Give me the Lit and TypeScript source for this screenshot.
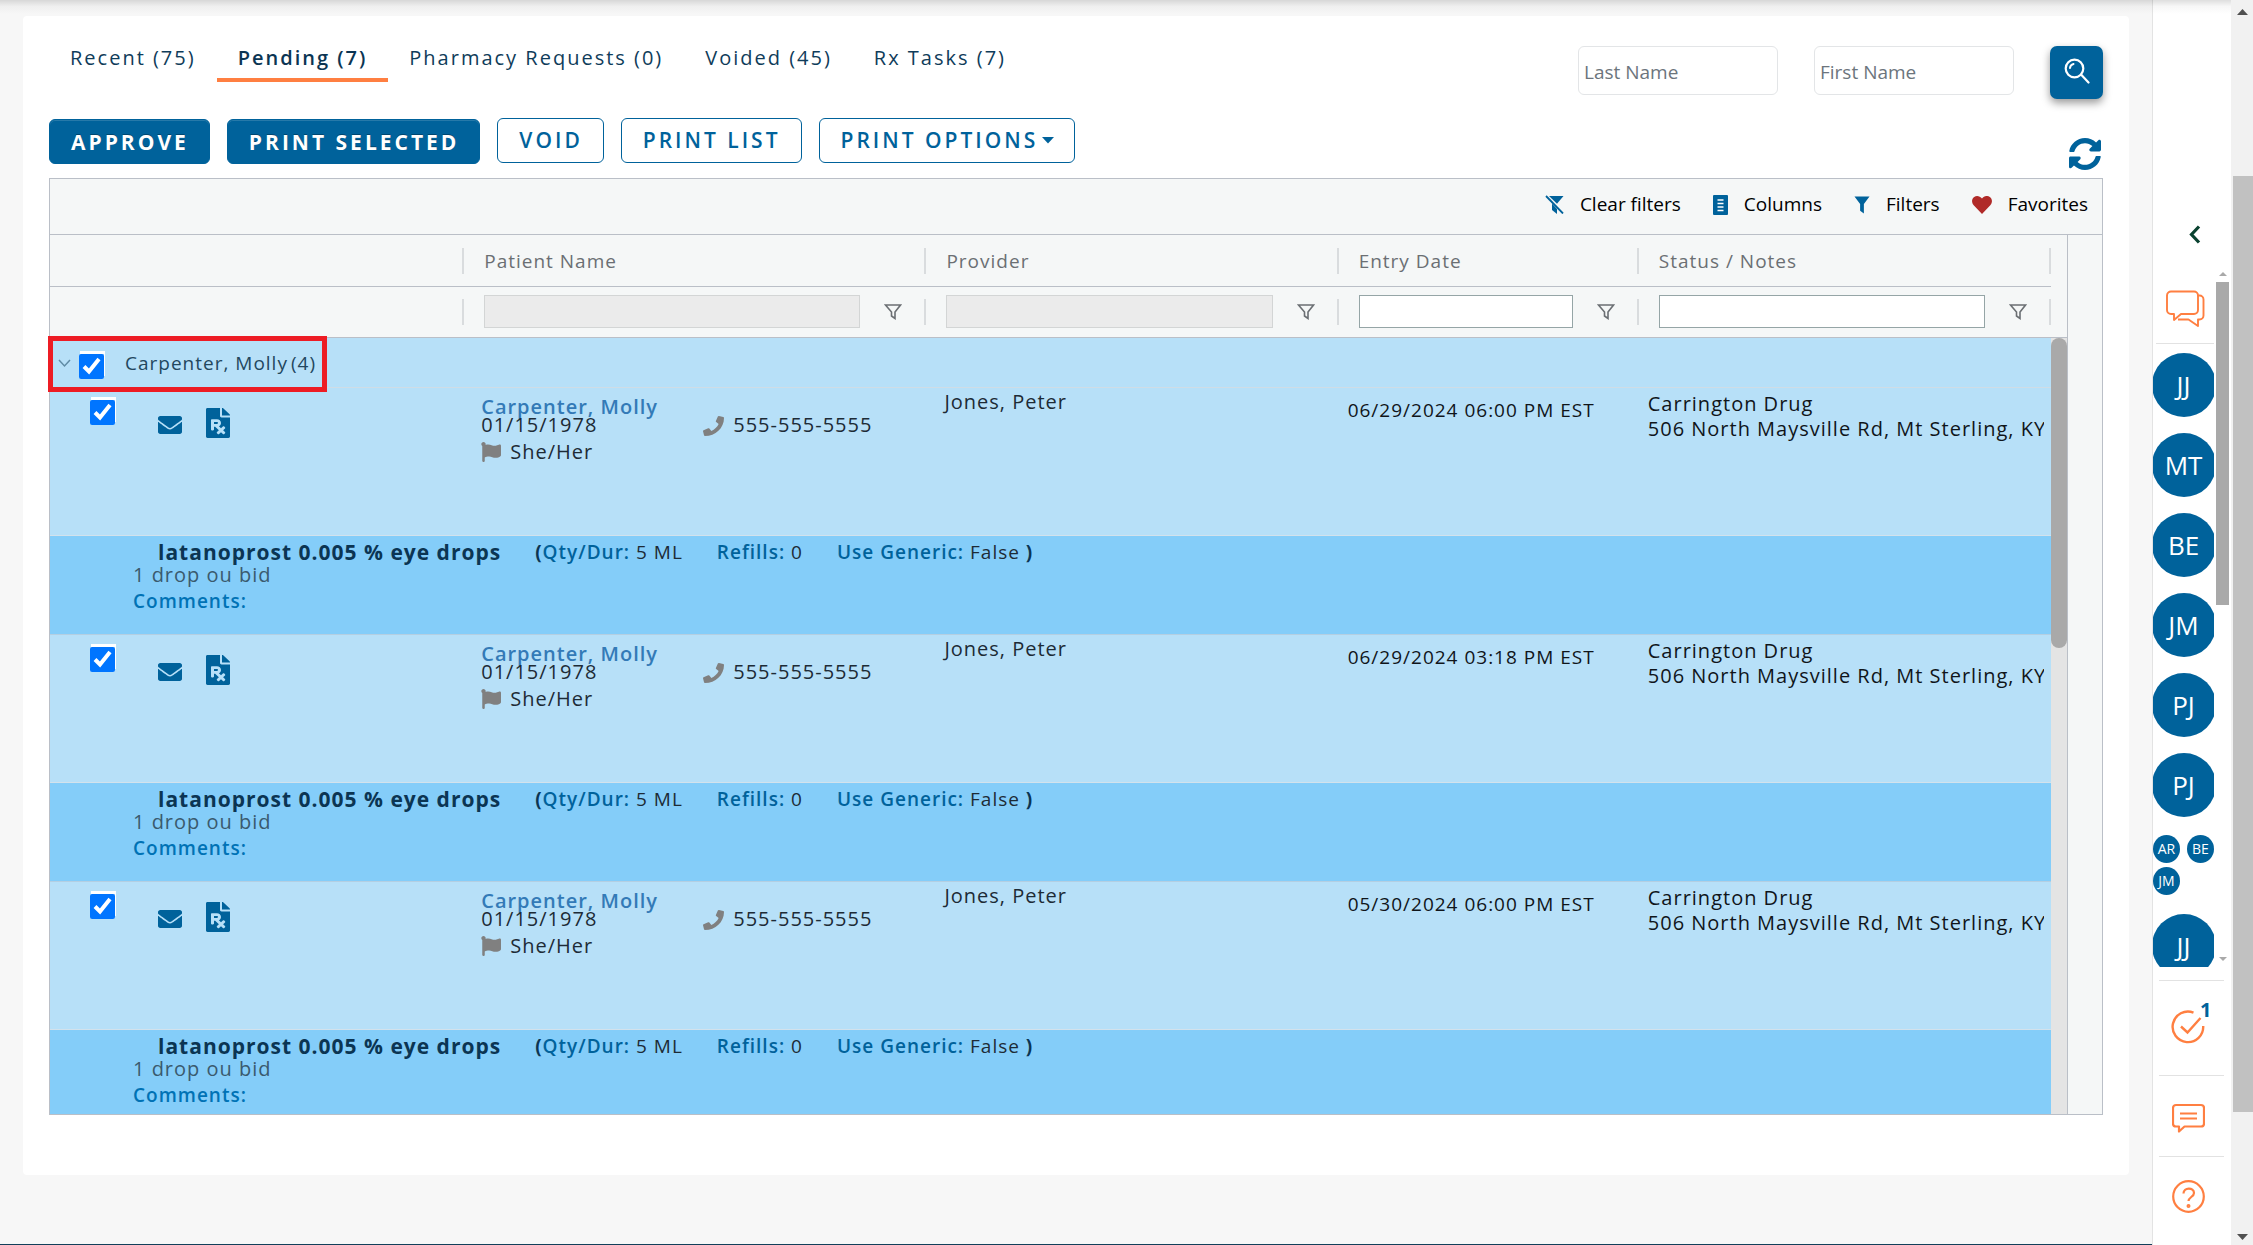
import { LitElement, html, svg, css } from "lit";
import { customElement } from "lit/decorators.js";

type Rx = { time: string };

const rows: Rx[] = [
  { time: "06/29/2024 06:00 PM EST" },
  { time: "06/29/2024 03:18 PM EST" },
  { time: "05/30/2024 06:00 PM EST" },
];

const shapes = {
  envelope: svg`<path d="M502.3 190.8c3.9-3.1 9.7-.2 9.7 4.7V400c0 26.5-21.5 48-48 48H48c-26.5 0-48-21.5-48-48V195.6c0-5 5.7-7.8 9.7-4.7 22.4 17.4 52.1 39.5 154.1 113.6 21.1 15.4 56.7 47.8 92.2 47.6 35.7.3 72-32.8 92.3-47.6 102-74.1 131.6-96.3 154-113.7zM256 320c23.2.4 56.6-29.2 73.4-41.4 132.7-96.3 142.8-104.7 173.4-128.7 5.8-4.5 9.2-11.5 9.2-18.9v-19c0-26.5-21.5-48-48-48H48c-26.5 0-48 21.5-48 48v19c0 7.4 3.4 14.3 9.2 18.9 30.6 23.9 40.7 32.4 173.4 128.7 16.8 12.2 50.2 41.8 73.4 41.4z"/>`,
  flag: svg`<path d="M349.565 98.783C295.978 98.783 251.721 64 184.348 64c-24.955 0-47.309 4.384-68.045 12.013a55.947 55.947 0 0 0 3.586-23.562C118.117 24.015 94.806 1.206 66.338.048 34.345-1.254 8 24.296 8 56c0 19.026 9.497 35.825 24 45.945V488c0 13.255 10.745 24 24 24h16c13.255 0 24-10.745 24-24v-94.4c28.311-12.064 63.582-22.122 114.435-22.122 53.588 0 97.844 34.783 165.217 34.783 48.169 0 86.667-16.294 122.505-40.858C506.84 359.452 512 349.571 512 339.045v-243.1c0-23.393-24.269-38.87-45.485-29.016-34.338 15.948-76.454 31.854-116.95 31.854z"/>`,
  phone: svg`<path d="M493.4 24.6l-104-24c-11.3-2.6-22.9 3.3-27.5 13.9l-48 112c-4.2 9.8-1.4 21.3 6.9 28l60.6 49.6c-36 76.7-98.9 140.5-177.2 177.2l-49.6-60.6c-6.8-8.3-18.2-11.1-28-6.9l-112 48C3.9 366.5-2 378.1.6 389.4l24 104C27.1 504.2 36.7 512 48 512c256.1 0 464-207.5 464-464 0-11.2-7.7-20.9-18.6-23.4z"/>`,
  refresh: svg`<path d="M370.72 133.28C339.458 104.008 298.888 87.962 255.848 88c-77.458.068-144.328 53.178-162.791 126.85-1.344 5.363-6.122 9.15-11.651 9.15H24.103c-7.498 0-13.194-6.807-11.807-14.176C33.933 94.924 134.813 8 256 8c66.448 0 126.791 26.136 171.315 68.685L463.03 40.97C478.149 25.851 504 36.559 504 57.941V192c0 13.255-10.745 24-24 24H345.941c-21.382 0-32.09-25.851-16.971-40.971l41.75-41.749zM32 296h134.059c21.382 0 32.09 25.851 16.971 40.971l-41.75 41.75c31.262 29.273 71.835 45.319 114.876 45.28 77.418-.07 144.315-53.144 162.787-126.849 1.344-5.363 6.122-9.15 11.651-9.15h57.304c7.498 0 13.194 6.807 11.807 14.176C478.067 417.076 377.187 504 256 504c-66.448 0-126.791-26.136-171.315-68.685L48.97 471.03C33.851 486.149 8 475.441 8 454.059V320c0-13.255 10.745-24 24-24z"/>`,
  file: svg`<path d="M224 136V0H24C10.7 0 0 10.7 0 24v464c0 13.3 10.7 24 24 24h336c13.3 0 24-10.7 24-24V160H248c-13.2 0-24-10.8-24-24zm68.53 179.48l11.31 11.31c6.25 6.25 6.25 16.38 0 22.63l-29.9 29.9L304 409.38c6.25 6.25 6.25 16.38 0 22.63l-11.31 11.31c-6.25 6.25-16.38 6.25-22.63 0L240 413.25l-30.06 30.06c-6.25 6.25-16.38 6.25-22.63 0L176 432c-6.25-6.25-6.25-16.38 0-22.63l30.06-30.06L146.74 320H128v48c0 8.84-7.16 16-16 16H96c-8.84 0-16-7.16-16-16V208c0-8.84 7.16-16 16-16h80c35.35 0 64 28.65 64 64 0 24.22-13.62 45.05-33.46 55.92L240 345.38l29.9-29.9c6.25-6.25 16.38-6.25 22.63 0zM176 272h-48v-32h48c8.82 0 16 7.18 16 16s-7.18 16-16 16zm208-150.1v6.1H256V0h6.1c6.4 0 12.5 2.5 17 7l97.9 98c4.5 4.5 7 10.6 7 16.9z"/>`,
};

const icon = (name: keyof typeof shapes, box: string, w: number, h: number) =>
  html`<svg class="fill" viewBox=${box} width=${w} height=${h} preserveAspectRatio="none" aria-hidden="true">${shapes[name]}</svg>`;

@customElement("app-root")
export class AppRoot extends LitElement {
  static styles = css`
    :host {
      display: flex;
      height: 100vh;
      overflow: hidden;
      position: relative;
      background: #f7f7f7;
      color: #1d2b36;
      font-family: "Open Sans", "Noto Sans", sans-serif;
      font-size: 20px;
      line-height: 25px;
    }
    * { box-sizing: border-box; }
    svg { display: block; flex: none; }
    .fill { fill: currentColor; }
    .line { fill: none; stroke: currentColor; }
    button, input { font: inherit; margin: 0; }
    button { cursor: pointer; }
    .shade {
      position: absolute;
      inset: 0 22px auto 0;
      height: 14px;
      background: linear-gradient(rgba(0,0,0,.13), rgba(0,0,0,.03) 45%, rgba(0,0,0,0));
      pointer-events: none;
    }
    .page {
      flex: 1;
      min-width: 0;
      padding: 16px 23px 69px;
      border-bottom: 1px solid #123f5a;
      display: flex;
    }
    .card {
      flex: 1;
      min-width: 0;
      background: #fff;
      border-radius: 4px;
      padding: 26px 26px 60px;
      display: flex;
      flex-direction: column;
    }
    .top { display: flex; justify-content: space-between; height: 61px; }
    .tabs { display: flex; align-items: flex-start; }
    .tab {
      border: 0;
      background: none;
      padding: 3px 21px 8px;
      color: #0f3c5a;
      letter-spacing: 2px;
      border-bottom: 4px solid transparent;
    }
    .tab.on { font-weight: 600; color: #0b3553; border-bottom-color: #ff7f41; }
    .search { display: flex; gap: 36px; padding-top: 4px; }
    .search input {
      width: 200px;
      height: 49px;
      border: 1px solid #e3e5e7;
      border-radius: 6px;
      padding: 2px 5px 0;
      font-size: 19px;
      background: #fff;
    }
    .search input::placeholder { color: #6c757d; opacity: 1; }
    .go {
      width: 53px;
      height: 53px;
      border: 0;
      border-radius: 7px;
      background: #00629b;
      color: #fff;
      padding: 0 0 4px;
      display: grid;
      place-items: center;
      box-shadow: 0 4px 8px rgba(0,0,0,.4);
    }
    .actions { display: flex; align-items: flex-start; gap: 17px; height: 75px; padding-top: 15px; }
    .btn {
      height: 45px;
      border: 1px solid #00629b;
      border-radius: 6px;
      padding: 0 20px 0 21px;
      background: #fff;
      color: #00629b;
      font-size: 21px;
      font-weight: 600;
      letter-spacing: 3px;
      display: flex;
      align-items: center;
      gap: 4px;
    }
    .btn.main {
      background: #00629b;
      color: #fff;
      font-weight: 700;
      margin-top: 1px;
      padding-top: 2px;
      text-shadow: 0 -1px 0 rgba(0,0,0,.3);
      box-shadow: inset 0 1px 0 rgba(255,255,255,.15);
    }
    .refresh { margin-left: auto; margin-top: 20px; border: 0; background: none; padding: 0 2px 0 0; color: #00629b; }
    .grid {
      flex: 1;
      min-height: 0;
      border: 1px solid #babfc7;
      display: flex;
      flex-direction: column;
      background: #f5f7f7;
    }
    .tools {
      height: 56px;
      flex: none;
      border-bottom: 1px solid #babfc7;
      display: flex;
      justify-content: flex-end;
      align-items: center;
      gap: 32px;
      padding: 0 14px 4px;
    }
    .tool {
      border: 0;
      background: none;
      padding: 0;
      display: flex;
      align-items: center;
      gap: 16px;
      font-size: 19px;
      color: #000;
    }
    .blue { color: #00629b; }
    .red { color: #b02a28; }
    .body { flex: 1; min-height: 0; display: flex; }
    .clip { flex: 1; min-width: 0; overflow-x: visible; overflow-y: clip; }
    .over { position: relative; }
    table { width: 100%; border-spacing: 0; table-layout: fixed; }
    .c1 { width: 20.7%; }
    .c2 { width: 23.1%; }
    .c3 { width: 20.6%; }
    .c4 { width: 15%; }
    th, td { padding: 0; text-align: left; vertical-align: top; font-weight: 400; }
    .head { font-size: 19px; color: #6b6f73; letter-spacing: 1px; height: 52px; border-bottom: 1px solid #babfc7; }
    .head.filters { height: 51px; }
    .cell { height: 51px; display: flex; align-items: center; justify-content: flex-end; padding-left: 20px; }
    .filters .cell { height: 49px; }
    .cell::after { content: ""; width: 2px; height: 26px; background: #d9dcde; flex: none; }
    .label { flex: 1; padding-top: 2px; }
    .cell input {
      flex: 1;
      min-width: 0;
      height: 33px;
      border: 1px solid #95a5a6;
      background: #fff;
      border-radius: 0;
      padding: 0 6px;
    }
    .cell input:disabled { background: #ebebeb; border-color: #d3d5d5; }
    .funnel { border: 0; background: none; padding: 0 22px 0 24px; color: #6b6f73; }
    .group { height: 50px; background: #b7e0f8; border-bottom: 1px solid #cfdde6; }
    .groupline { display: flex; align-items: center; padding: 2px 0 0 8px; height: 49px; color: #23475e; font-size: 19px; }
    .groupline .line { color: #5f8ba5; }
    .groupline label { margin: 0 3px 1px 21px; letter-spacing: 1px; }
    .count { margin-bottom: 1px; letter-spacing: 1px; }
    .check {
      width: 25px;
      height: 25px;
      margin: 5px 0 0 8px;
      border-radius: 4px;
      box-shadow: 1px -3px 0 #fff;
      accent-color: #0075ff;
      flex: none;
    }
    .row td { height: 148px; background: #b7e0f8; border-bottom: 1px solid #d3e2ec; letter-spacing: 1px; }
    .marks { display: flex; align-items: flex-start; padding: 12px 0 0 40px; }
    .marks .check { margin: 0; }
    .mark { border: 0; background: none; color: #00629b; }
    .mark.mail { margin: 0 24px 0 43px; padding: 16px 0 0; }
    .mark.rx { padding: 8px 0 0; }
    .who { padding: 10px 0 0 17px; line-height: 18px; }
    .name { display: block; color: #337ab7; font-weight: 600; text-decoration: none; }
    .pair { display: flex; }
    .pair span { flex: 0 0 222px; }
    .pair b { font-weight: 400; display: flex; gap: 9px; }
    .grey { color: #808080; }
    .flagged { display: flex; gap: 9px; align-items: center; line-height: 32px; }
    .prov { padding: 1px 0 0 18px; }
    .date { padding: 10px 0 0 9px; color: #10151a; font-size: 19px; }
    .status { padding: 3px 0 0 9px; margin-right: 7px; overflow: hidden; white-space: nowrap; color: #10151a; }
    .detail td { height: 99px; background: #84cdf9; border-bottom: 1px solid #b4cfe2; letter-spacing: 1px; }
    .med { padding: 3px 0 0 83px; }
    .rxline { line-height: 26px; padding-left: 25px; display: flex; gap: 34px; font-size: 19px; }
    .rxline strong { font-weight: 700; color: #0b3553; }
    .rxline .drug { font-size: 21px; }
    .rxline em { font-style: normal; font-weight: 600; color: #00629b; }
    .sig { line-height: 19px; color: #3a5a6e; }
    .com { line-height: 34px; font-size: 19px; font-weight: 600; color: #0072b5; }
    .frame {
      position: absolute;
      left: -2px;
      top: -2px;
      width: 279px;
      height: 56px;
      border: 5px solid #ed1c24;
      pointer-events: none;
    }
    .gbar { width: 17px; flex: none; display: flex; flex-direction: column; border-right: 1px solid #babfc7; }
    .gbar i { height: 103px; border-bottom: 1px solid #babfc7; flex: none; }
    .gbar b { flex: 1; background: #e4e4e4; }
    .gbar b::before { content: ""; display: block; height: 40%; background: #a9a9a9; border-radius: 8px; }
    .side { width: 34px; flex: none; }
    .rail {
      width: 79px;
      flex: none;
      background: #fff;
      border-left: 1px solid #e3e3e3;
      display: flex;
      flex-direction: column;
      color: #ff7f41;
    }
    .rail button { border: 0; background: none; padding: 0; color: inherit; display: block; }
    .rail .fold { color: #0a4230; margin: 225px 0 28px 36px; }
    .chats { display: flex; height: 695px; flex: 0 1 auto; min-height: 0; }
    .list { width: 61px; overflow: hidden; display: flex; flex-direction: column; align-items: center; }
    .list .chat { margin: 18px 0 16px 4px; flex: none; }
    .rule { height: 1px; background: #e2e2e2; width: 58px; flex: none; margin: 0 0 9px 3px; align-self: flex-start; }
    .list .face {
      width: 64px;
      height: 64px;
      flex: none;
      border-radius: 50%;
      background: #00629b;
      color: #fff;
      font-size: 26px;
      margin-bottom: 16px;
    }
    .trio { align-self: stretch; display: grid; grid-template-columns: 27px 27px; justify-content: space-between; gap: 4px 7px; margin: 2px 0 19px; flex: none; }
    .list .mini {
      height: 28px;
      border-radius: 50%;
      background: #00629b;
      color: #fff;
      font-size: 14px;
      line-height: 28px;
    }
    .rbar { width: 13px; margin-left: 2px; display: flex; flex-direction: column; align-items: center; color: #a9a9a9; padding: 0 0 6px; }
    .rbar i { width: 13px; height: 323px; background: #a9a9a9; margin: 6px 0 auto; }
    .hr { height: 1px; background: #e2e2e2; margin: 0 7px 0 6px; flex: none; }
    .foot { display: flex; flex-direction: column; padding-top: 13px; }
    .foot .item { margin-left: 19px; }
    .tasks { display: flex; padding: 22px 0 31px 18px; align-items: flex-start; }
    .tasks button { margin-top: 7px; }
    .tasks sup { color: #00629b; font-weight: 700; font-size: 20px; line-height: 14px; margin-left: -5px; }
    .bar { width: 22px; flex: none; background: #f1f1f1; display: flex; flex-direction: column; align-items: center; color: #505050; padding: 9px 0 5px; }
    .bar i { width: 20px; margin: 161px 0 auto; height: 936px; flex: 0 1 auto; background: #c1c1c1; align-self: flex-end; }
  `;

  private funnel() {
    return html`<button class="funnel" aria-label="Filter options">
      <svg class="line" width="18" height="16" viewBox="0 0 18 16" stroke-width="1.6"><path d="M1.5 1h15L11 8v6.5L7.5 12V8z"/></svg>
    </button>`;
  }

  private row(r: Rx) {
    return html`
      <tr class="row">
        <td>
          <div class="marks">
            <input class="check" type="checkbox" checked aria-label="Select prescription" />
            <button class="mark mail" aria-label="Message">${icon("envelope", "0 64 512 384", 24, 18)}</button>
            <button class="mark rx" aria-label="Prescription">${icon("file", "0 0 384 512", 24, 30)}</button>
          </div>
        </td>
        <td>
          <div class="who">
            <a class="name" href="#">Carpenter, Molly</a>
            <div class="pair">
              <span>01/15/1978</span>
              <b><i class="grey">${icon("phone", "0 0 512 512", 21, 20)}</i>555-555-5555</b>
            </div>
            <div class="flagged"><i class="grey">${icon("flag", "0 0 512 512", 20, 20)}</i>She/Her</div>
          </div>
        </td>
        <td><div class="prov">Jones, Peter</div></td>
        <td><div class="date">${r.time}</div></td>
        <td><div class="status">Carrington Drug<br />506 North Maysville Rd, Mt Sterling, KY</div></td>
      </tr>
      <tr class="detail">
        <td colspan="5">
          <div class="med">
            <div class="rxline">
              <strong class="drug">latanoprost 0.005 % eye drops</strong>
              <span><strong>(</strong><em>Qty/Dur:</em> 5 ML</span>
              <span><em>Refills:</em> 0</span>
              <span><em>Use Generic:</em> False <strong>)</strong></span>
            </div>
            <div class="sig">1 drop ou bid</div>
            <div class="com">Comments:</div>
          </div>
        </td>
      </tr>`;
  }

  render() {
    return html`
      <main class="page">
        <section class="card">
          <div class="top">
            <nav class="tabs">
              <button class="tab">Recent (75)</button>
              <button class="tab on">Pending (7)</button>
              <button class="tab">Pharmacy Requests (0)</button>
              <button class="tab">Voided (45)</button>
              <button class="tab">Rx Tasks (7)</button>
            </nav>
            <form class="search">
              <input type="text" placeholder="Last Name" aria-label="Last Name" />
              <input type="text" placeholder="First Name" aria-label="First Name" />
              <button class="go" type="button" aria-label="Search">
                <svg class="line" width="26" height="26" viewBox="0 0 26 26" stroke-width="2.2" stroke-linecap="round"><circle cx="10.5" cy="10.5" r="8.8"/><path d="M17.5 17l7 7.5"/><path d="M6 10a4.5 4.5 0 0 1 3.5-4" stroke-width="2"/></svg>
              </button>
            </form>
          </div>
          <div class="actions">
            <button class="btn main">APPROVE</button>
            <button class="btn main">PRINT SELECTED</button>
            <button class="btn">VOID</button>
            <button class="btn">PRINT LIST</button>
            <button class="btn">PRINT OPTIONS<svg class="fill" width="12" height="7" viewBox="0 0 12 7"><path d="M0 0h12L6 6.5z"/></svg></button>
            <button class="refresh" aria-label="Refresh">${icon("refresh", "8 8 496 496", 32, 32)}</button>
          </div>
          <div class="grid">
            <div class="tools">
              <button class="tool">
                <svg class="fill blue" width="19" height="19" viewBox="0 0 19 19"><path d="M4 1h14.5L12 8.7z"/><path d="M7 8.5L12 14v5l-5-4z"/><path class="line" d="M1 1l17 17.5" stroke-width="1.8"/></svg>Clear filters
              </button>
              <button class="tool">
                <svg class="fill blue" width="15" height="20" viewBox="0 0 15 20"><rect width="15" height="20" rx="1"/><path d="M4.5 5h6M4.5 8.5h6M4.5 12h6M4.5 15.5h6" stroke="#fff" stroke-width="1.3"/></svg>Columns
              </button>
              <button class="tool">
                <svg class="fill blue" width="16" height="18" viewBox="0 0 17 18"><path d="M.5 0h16L10.5 8v10l-4-3V8z"/></svg>Filters
              </button>
              <button class="tool">
                <svg class="fill red" width="20" height="18" viewBox="0 0 20 18"><path d="M10 18L1.7 9.3C-.8 6.5-.3 2.5 2.2.9 4.8-.8 8 .1 10 2.6 12-.1 15.2-.8 17.8.9c2.500 1.600 3 5.600.5 8.400z"/></svg>Favorites
              </button>
            </div>
            <div class="body">
              <div class="clip">
                <table>
                  <colgroup><col class="c1" /><col class="c2" /><col class="c3" /><col class="c4" /><col /></colgroup>
                  <thead>
                    <tr>
                      ${["", "Patient Name", "Provider", "Entry Date", "Status / Notes"].map(
                        (t) => html`<th class="head"><div class="cell"><span class="label">${t}</span></div></th>`
                      )}
                    </tr>
                    <tr>
                      <td class="head filters"><div class="cell"></div></td>
                      <td class="head filters"><div class="cell"><input disabled aria-label="Patient name filter" />${this.funnel()}</div></td>
                      <td class="head filters"><div class="cell"><input disabled aria-label="Provider filter" />${this.funnel()}</div></td>
                      <td class="head filters"><div class="cell"><input aria-label="Entry date filter" />${this.funnel()}</div></td>
                      <td class="head filters"><div class="cell"><input aria-label="Status filter" />${this.funnel()}</div></td>
                    </tr>
                  </thead>
                  <tbody>
                    <tr>
                      <td class="group" colspan="5">
                        <div class="over">
                          <div class="groupline">
                            <svg class="line" width="13" height="9" viewBox="0 0 13 9" stroke-width="1.5"><path d="M1 1l5.5 6L12 1"/></svg>
                            <input class="check" id="grp" type="checkbox" checked />
                            <label for="grp">Carpenter, Molly</label><span class="count">(4)</span>
                          </div>
                          <div class="frame"></div>
                        </div>
                      </td>
                    </tr>
                    ${rows.map((r) => this.row(r))}
                  </tbody>
                </table>
              </div>
              <div class="gbar"><i></i><b></b></div>
              <div class="side"></div>
            </div>
          </div>
        </section>
      </main>
      <aside class="rail">
        <button class="fold" aria-label="Collapse">
          <svg class="line" width="12" height="19" viewBox="0 0 12 19" stroke-width="3.2"><path d="M10 1.5L2.5 9.5l7.5 8"/></svg>
        </button>
        <div class="chats">
          <div class="list">
            <button class="chat" aria-label="Chats">
              <svg class="line" width="39" height="37" viewBox="0 0 39 37" stroke-width="1.9" stroke-linejoin="round"><path d="M5 1.5h23a4 4 0 0 1 4 4v14.5a4 4 0 0 1-4 4H15l-7 6v-6H5a4 4 0 0 1-4-4V5.5a4 4 0 0 1 4-4z"/><path d="M32 5.5h1.5a4 4 0 0 1 4 4v16a4 4 0 0 1-4 4H32v6.5l-9.500-6.500H12"/></svg>
            </button>
            <div class="rule"></div>
            ${["JJ", "MT", "BE", "JM", "PJ", "PJ"].map((n) => html`<button class="face">${n}</button>`)}
            <div class="trio">${["AR", "BE", "JM"].map((n) => html`<button class="mini">${n}</button>`)}</div>
            <button class="face">JJ</button>
          </div>
          <div class="rbar">
            <svg class="fill" width="8" height="4" viewBox="0 0 8 4"><path d="M0 4L4 0l4 4z"/></svg>
            <i></i>
            <svg class="fill" width="8" height="4" viewBox="0 0 8 4"><path d="M0 0l4 4 4-4z"/></svg>
          </div>
        </div>
        <div class="foot">
          <div class="hr"></div>
          <div class="tasks">
            <button aria-label="Tasks">
              <svg class="line" width="34" height="34" viewBox="0 0 34 34" stroke-width="2.4"><path d="M22.5 2.6A15.3 15.3 0 1 0 32.2 16"/><path d="M10 16.5l6.5 6L29.5 8"/></svg>
            </button><sup>1</sup>
          </div>
          <div class="hr"></div>
          <button class="item" aria-label="Comments">
            <svg class="line" width="33" height="80" viewBox="0 -28 33 80" stroke-width="2.2" stroke-linejoin="round"><path d="M4 1h25a3 3 0 0 1 3 3v15.5a3 3 0 0 1-3 3H12.5L7 27.5v-5H4a3 3 0 0 1-3-3V4a3 3 0 0 1 3-3z"/><path d="M8 9.5h17M8 14.5h17"/></svg>
          </button>
          <div class="hr"></div>
          <button class="item" aria-label="Help">
            <svg class="line" width="33" height="56" viewBox="0 -23 33 56" stroke-width="2.2"><circle cx="16.5" cy="16.5" r="15.3"/><path d="M11.5 13.5c0-6.5 10.5-6.5 10.5-.6 0 4-5.5 4.2-5.5 8.2"/><circle cx="16.5" cy="26" r=".9"/></svg>
          </button>
        </div>
      </aside>
      <div class="bar">
        <svg class="fill" width="11" height="6" viewBox="0 0 11 6"><path d="M0 6l5.5-6L11 6z"/></svg>
        <i></i>
        <svg class="fill" width="11" height="6" viewBox="0 0 11 6"><path d="M0 0l5.5 6L11 0z"/></svg>
      </div>
      <div class="shade"></div>
    `;
  }
}
